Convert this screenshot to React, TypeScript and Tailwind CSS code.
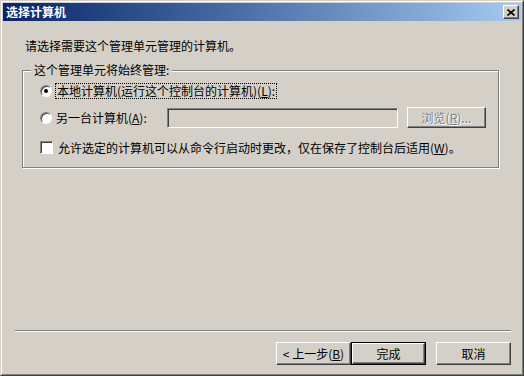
const font = { fontFamily: '"Noto Sans CJK SC", "Noto Sans", sans-serif' };

function ClassicButton({
  children,
  isDefault = false,
  disabled = false,
  className = "",
}: {
  children: React.ReactNode;
  isDefault?: boolean;
  disabled?: boolean;
  className?: string;
}) {
  const inner = (
    <div
      className={`flex h-full w-full items-center justify-center border border-t-white border-l-white border-r-[#404040] border-b-[#404040] shadow-[inset_-1px_-1px_0_#808080] ${
        disabled ? "text-[#808080] [text-shadow:1px_1px_0_#ffffff]" : "text-black"
      }`}
    >
      {children}
    </div>
  );
  if (isDefault) {
    return (
      <div className={`border border-black ${className}`}>{inner}</div>
    );
  }
  return <div className={className}>{inner}</div>;
}

function Radio({ checked }: { checked?: boolean }) {
  return (
    <div className="flex h-[12px] w-[12px] shrink-0 items-center justify-center rounded-full border border-t-[#808080] border-l-[#808080] border-r-white border-b-white bg-white shadow-[inset_1px_1px_0_#404040]">
      {checked && <div className="h-[4px] w-[4px] rounded-full bg-black" />}
    </div>
  );
}

export default function App() {
  return (
    <div
      className="h-[376px] w-[524px] overflow-hidden border border-t-[#d4d0c8] border-l-[#d4d0c8] border-r-[#404040] border-b-[#404040] bg-[#d4d0c8] text-[12px] text-black"
      style={font}
    >
      <div className="flex h-full flex-col border border-t-white border-l-white border-r-[#808080] border-b-[#808080] p-px">
        {/* title bar */}
        <div className="flex h-[18px] shrink-0 items-center justify-between bg-gradient-to-r from-[#0a246a] to-[#a6caf0] pl-[3px] pr-[2px]">
          <span className="text-[12px] font-bold leading-none text-white">选择计算机</span>
          <div className="flex h-[14px] w-[16px] items-center justify-center border border-t-white border-l-white border-r-[#404040] border-b-[#404040] bg-[#d4d0c8] shadow-[inset_-1px_-1px_0_#808080]">
            <svg width="8" height="7" viewBox="0 0 8 7">
              <path d="M0.5 0.5 L7.5 6.5 M7.5 0.5 L0.5 6.5" stroke="black" strokeWidth="1.6" />
            </svg>
          </div>
        </div>

        <div className="mt-[18px] h-[14px] pl-[22px] leading-[14px]">请选择需要这个管理单元管理的计算机。</div>

        {/* group box */}
        <div className="relative ml-[19px] mt-[17px] w-[477px] border border-[#808080] pb-[13px] pl-[17px] pr-[11px] pt-[11px] shadow-[1px_1px_0_#ffffff,inset_1px_1px_0_#ffffff]">
          <span className="absolute -top-[8px] left-[8px] bg-[#d4d0c8] px-[3px] leading-[14px]">
            这个管理单元将始终管理:
          </span>

          <div className="flex h-[18px] items-center gap-[3px]">
            <Radio checked />
            <span className="border border-dotted border-black px-px leading-[14px]">
              本地计算机(运行这个控制台的计算机)(<u>L</u>):
            </span>
          </div>

          <div className="mt-[7px] flex h-[21px] items-center">
            <Radio />
            <span className="ml-[4px] w-[111px] leading-[14px]">
              另一台计算机(<u>A</u>):
            </span>
            <div className="h-[20px] w-[231px] border border-t-[#808080] border-l-[#808080] border-r-white border-b-white bg-[#d4d0c8] shadow-[inset_1px_1px_0_#404040]" />
            <ClassicButton disabled className="ml-[9px] h-[21px] w-[79px]">
              浏览(<u>R</u>)...
            </ClassicButton>
          </div>

          <div className="mt-[13px] flex h-[13px] items-center">
            <div className="h-[13px] w-[13px] shrink-0 border border-t-[#808080] border-l-[#808080] border-r-white border-b-white bg-white shadow-[inset_1px_1px_0_#404040]" />
            <span className="ml-[5px] leading-[14px]">
              允许选定的计算机可以从命令行启动时更改，仅在保存了控制台后适用(<u>W</u>)。
            </span>
          </div>
        </div>

        <div className="flex-1" />

        {/* separator */}
        <div className="ml-[12px] h-[2px] w-[496px] border-t border-t-[#808080] border-b border-b-white" />

        <div className="mb-[8px] mt-[10px] flex justify-end pr-[10px]">
          <ClassicButton className="h-[23px] w-[75px]">
            &lt; 上一步(<u>B</u>)
          </ClassicButton>
          <ClassicButton isDefault className="h-[23px] w-[75px]">
            完成
          </ClassicButton>
          <ClassicButton className="ml-[10px] h-[23px] w-[75px]">取消</ClassicButton>
        </div>
      </div>
    </div>
  );
}
